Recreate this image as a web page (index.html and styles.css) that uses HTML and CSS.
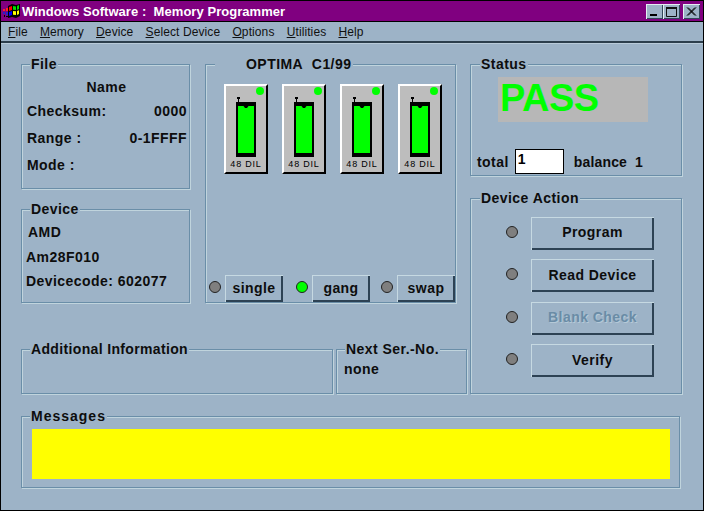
FILE: index.html
```html
<!DOCTYPE html>
<html lang="en">
<head>
<meta charset="utf-8">
<title>Memory Programmer</title>
<link rel="stylesheet" href="styles.css">
</head>
<body>
<div class="window">
  <header class="titlebar">
    <svg class="logo" width="18" height="17" viewBox="0 0 18 17">
      <path d="M5 3l4-2 4 1 4-1v12l-4 2-4-1-4 1z" fill="#000"/>
      <path d="M6 4l3-1v4l-3 1z" fill="#f00"/>
      <path d="M10 3l3 .5V7l-3-.2z" fill="#0d0"/>
      <path d="M14 3l2-1v4l-2 1z" fill="#0d0"/>
      <path d="M6 9l3-1v4l-3 1z" fill="#00f"/>
      <path d="M10 8l3 .2V12l-3-.3z" fill="#ff0"/>
      <path d="M14 8l2-.8V11l-2 1z" fill="#ff0"/>
      <path d="M0 6h2v2H0zM3 5h2v3H3z" fill="#f22"/>
      <path d="M0 9h2v2H0zM3 9h2v3H3z" fill="#22c"/>
      <path d="M1 12h1v2H1zM3 13h2v1H3z" fill="#000"/>
    </svg>
    <span class="title">Windows Software :&nbsp; Memory Programmer</span>
    <div class="caption-buttons">
      <button class="cap"><svg width="17" height="15" viewBox="0 0 17 15"><rect x="4" y="10" width="7" height="2" fill="#000"/></svg></button>
      <button class="cap"><svg width="17" height="15" viewBox="0 0 17 15"><path d="M3.5 3.5h10v9h-10z" fill="none" stroke="#111"/><rect x="3" y="3" width="11" height="2" fill="#111"/></svg></button>
      <button class="cap cap-close"><svg width="17" height="15" viewBox="0 0 17 15"><path d="M4 3.5l8 8M5 3.5l8 8M12 3.5l-8 8M13 3.5l-8 8" stroke="#000" fill="none"/></svg></button>
    </div>
  </header>
  <nav class="menu">
    <span><u>F</u>ile</span><span><u>M</u>emory</span><span><u>D</u>evice</span><span><u>S</u>elect Device</span><span><u>O</u>ptions</span><span><u>U</u>tilities</span><span><u>H</u>elp</span>
  </nav>
  <main class="client">
    <div class="upper">
      <div class="left">
        <div class="top-row">
          <div class="stack">
            <fieldset class="panel file">
              <legend>File</legend>
              <div class="center-line">Name</div>
              <div class="kv"><span>Checksum:</span><span>0000</span></div>
              <div class="kv"><span>Range :</span><span>0-1FFFF</span></div>
              <div class="kv"><span>Mode :</span></div>
            </fieldset>
            <fieldset class="panel device">
              <legend>Device</legend>
              <div class="line amd">AMD</div>
              <div class="line">Am28F010</div>
              <div class="line">Devicecode: 602077</div>
            </fieldset>
          </div>
          <fieldset class="panel optima">
            <legend>OPTIMA&nbsp; C1/99</legend>
            <div class="sockets">
              <div class="socket"><i class="socket-led"></i><svg class="chip" width="20" height="60" viewBox="0 0 20 60"><path d="M1 0h3v2H3v3H2V2H1z" fill="#000"/><rect y="5" width="20" height="55" fill="#000"/><path d="M2 9h5.500L9 11h2l1.500-2H18v47H2z" fill="#0f0"/></svg><span class="socket-label">48 DIL</span></div>
              <div class="socket"><i class="socket-led"></i><svg class="chip" width="20" height="60" viewBox="0 0 20 60"><path d="M1 0h3v2H3v3H2V2H1z" fill="#000"/><rect y="5" width="20" height="55" fill="#000"/><path d="M2 9h5.500L9 11h2l1.500-2H18v47H2z" fill="#0f0"/></svg><span class="socket-label">48 DIL</span></div>
              <div class="socket"><i class="socket-led"></i><svg class="chip" width="20" height="60" viewBox="0 0 20 60"><path d="M1 0h3v2H3v3H2V2H1z" fill="#000"/><rect y="5" width="20" height="55" fill="#000"/><path d="M2 9h5.500L9 11h2l1.500-2H18v47H2z" fill="#0f0"/></svg><span class="socket-label">48 DIL</span></div>
              <div class="socket"><i class="socket-led"></i><svg class="chip" width="20" height="60" viewBox="0 0 20 60"><path d="M1 0h3v2H3v3H2V2H1z" fill="#000"/><rect y="5" width="20" height="55" fill="#000"/><path d="M2 9h5.500L9 11h2l1.500-2H18v47H2z" fill="#0f0"/></svg><span class="socket-label">48 DIL</span></div>
            </div>
            <div class="modes">
              <i class="led"></i><button class="btn mode single">single</button>
              <i class="led on"></i><button class="btn mode gang">gang</button>
              <i class="led"></i><button class="btn mode swap">swap</button>
            </div>
          </fieldset>
        </div>
        <div class="bottom-row">
          <fieldset class="panel additional"><legend>Additional Information</legend></fieldset>
          <fieldset class="panel next"><legend>Next Ser.-No.</legend><div class="none">none</div></fieldset>
        </div>
      </div>
      <div class="right">
        <fieldset class="panel status">
          <legend>Status</legend>
          <div class="pass">PASS</div>
          <div class="totals">
            <span>total</span><input class="total-input" value="1" aria-label="total"><span class="balance">balance&nbsp; 1</span>
          </div>
        </fieldset>
        <fieldset class="panel action">
          <legend>Device Action</legend>
          <div class="action-row"><i class="led"></i><button class="btn act">Program</button></div>
          <div class="action-row"><i class="led"></i><button class="btn act">Read Device</button></div>
          <div class="action-row"><i class="led"></i><button class="btn act disabled">Blank Check</button></div>
          <div class="action-row"><i class="led"></i><button class="btn act">Verify</button></div>
        </fieldset>
      </div>
    </div>
    <fieldset class="panel messages">
      <legend>Messages</legend>
      <div class="msg-box"></div>
    </fieldset>
  </main>
</div>
</body>
</html>
```
FILE: styles.css
```css
* { box-sizing: border-box; }
html, body { margin: 0; padding: 0; }
body { width: 704px; height: 511px; overflow: hidden; background: #000; }
.window {
  width: 704px; height: 511px;
  border: 1px solid #000;
  background: #9db3c7;
  display: flex; flex-direction: column;
  font: bold 14px "Liberation Sans", Arial, sans-serif;
  color: #0d0d0d;
  letter-spacing: .45px;
}
.titlebar {
  height: 21px; flex: none;
  background: #800080;
  color: #fff;
  display: flex; align-items: center;
  border-bottom: 1px solid #000;
  padding-left: 2px;
}
.logo { flex: none; margin-right: 1px; }
.title { font-size: 13px; letter-spacing: .05px; }
.caption-buttons { margin-left: auto; display: flex; margin-right: 3px; }
.cap {
  width: 17px; height: 15px; padding: 0; display: block;
  background: #9db3c7;
  border: 0;
  box-shadow: inset 1px 1px 0 #e4eef2, inset -1px -1px 0 #31475a;
}
.cap svg { display: block; }
.cap-close { margin-left: 3px; }
.menu {
  height: 21px; flex: none;
  display: flex; align-items: center;
  padding-left: 7px; gap: 12.2px;
  font-weight: normal; font-size: 12px; letter-spacing: .1px;
  border-bottom: 2px solid #2c3e4c;
  box-shadow: 0 1px 0 #b9cbd9;
  color: #111;
}
.client { flex: 1; padding: 0 0 0 20px; position: relative; }
.panel {
  margin: 0; padding: 0;
  min-width: 0;
  border: 1px solid #6a8ea8;
  box-shadow: 1px 1px 0 #c0d4dd, inset 1px 1px 0 #c0d4dd;
  position: relative;
}
.panel legend {
  margin-left: 8px;
  padding: 0 1px;
  height: 14px; line-height: 14px;
  background: #9db3c7;
  position: relative;
  white-space: nowrap;
}
.upper { display: flex; padding-top: 14px; }
.left { width: 446px; }
.top-row { display: flex; gap: 15px; }
.stack { width: 169px; display: flex; flex-direction: column; gap: 13px; }
.file { height: 132px; }
.device { height: 101px; }
.center-line { text-align: center; margin-top: 6px; line-height: 20px; padding-left: 2px; }
.kv { display: flex; justify-content: space-between; padding: 0 2px 0 5px; line-height: 20px; margin-top: 7px; }
.center-line + .kv { margin-top: 4px; }
.line { padding-left: 4px; line-height: 24.5px; }
.amd { padding-left: 6px; margin-top: 4px; }
.optima { width: 251px; height: 246px; }
.optima legend { margin-left: 9px; padding: 0 2px 0 31px; }
.sockets { display: flex; gap: 14px; padding: 13px 0 0 18px; }
.socket {
  width: 44px; height: 90px;
  background: #bdbdbd;
  border: 2px solid;
  border-color: #fff #000 #000 #fff;
  position: relative;
  display: flex; flex-direction: column; align-items: center;
  padding-top: 11px;
}
.chip { display: block; flex: none; }
.socket-led {
  position: absolute; top: 1px; right: 2px;
  width: 8px; height: 8px; border-radius: 50%; background: #0f0;
}
.socket-label { font: normal 9px/11px "Liberation Sans", sans-serif; letter-spacing: .8px; margin-top: 2px; color: #000; white-space: nowrap; }
.led {
  display: block; flex: none;
  width: 12px; height: 12px; border-radius: 50%;
  background: #7f7f7f; border: 1px solid #222;
  margin-bottom: 3px;
}
.led.on { background: #0f0; }
.modes { display: flex; align-items: center; padding: 101px 0 0 3px; }
.btn {
  font: inherit; letter-spacing: inherit; color: #0d0d0d;
  background: #9db3c7; padding: 0;
  border: 0;
  box-shadow: inset 1px 1px 0 #c6d9e2, inset -2px -2px 0 #2d4254;
}
.mode { height: 27px; padding-bottom: 2px; width: 58px; }
.single { margin: 0 13px 0 4px; }
.gang { margin: 0 11px 0 4px; }
.swap { margin-left: 4px; }
.bottom-row { display: flex; gap: 3px; margin-top: 39px; }
.additional { width: 312px; height: 52px; }
.additional legend { letter-spacing: .35px; }
.next { width: 131px; height: 52px; }
.none { padding-left: 7px; line-height: 16px; margin-top: 5px; }
.right { width: 212px; margin-left: 3px; display: flex; flex-direction: column; gap: 15px; }
.status { height: 119px; }
.status legend, .action legend { margin-left: 9px; }
.pass {
  width: 150px; height: 45px; margin: 6px 0 0 27px;
  background: #b7b7b7; color: #0f0;
  font: bold 38px/43px "Liberation Sans", sans-serif;
  letter-spacing: -.5px; padding-left: 2px;
}
.totals { display: flex; align-items: center; margin: 27px 0 0 6px; }
.total-input {
  width: 49px; height: 25px; margin: 0 10px 0 6px;
  border: 1px solid #000; background: #fff;
  font: inherit; letter-spacing: inherit; padding: 0 0 6px 2px;
  color: #000; outline: 0;
}
.balance { letter-spacing: .15px; }
.action { height: 203px; padding-top: 7px; }
.action-row { display: flex; align-items: center; height: 42.5px; padding-left: 35px; }
.act { width: 123px; height: 33px; margin-left: 13px; padding-bottom: 2px; }
.disabled { color: #6a8ca6; text-shadow: 1px 1px 0 #b5c9d7; }
.messages { width: 659px; height: 79px; margin-top: 15px; }
.messages legend { letter-spacing: 1px; }
.msg-box { height: 50px; margin: 6px 9px 0 10px; background: #ff0; }
```
